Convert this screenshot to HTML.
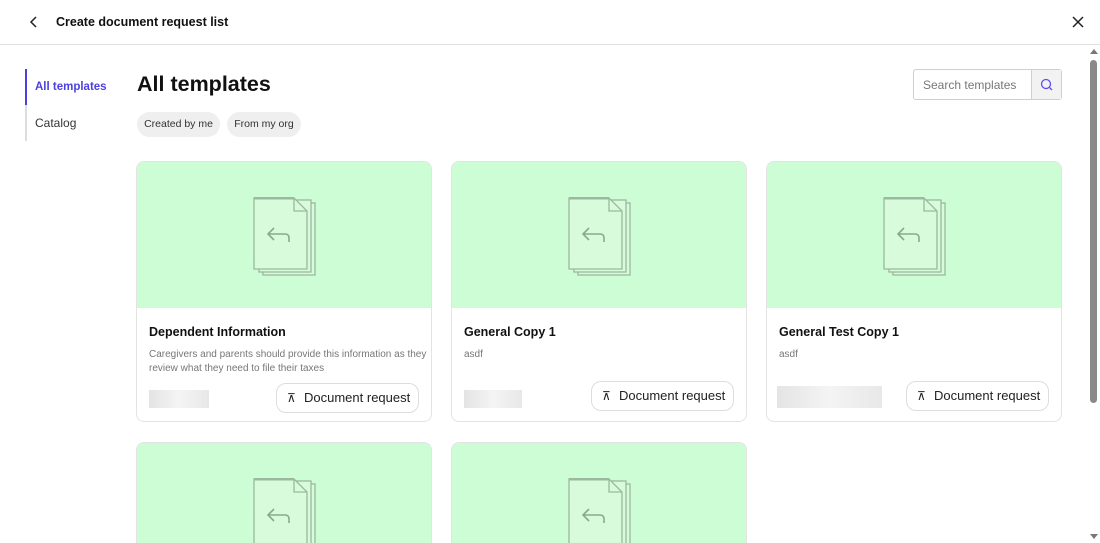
<!DOCTYPE html>
<html><head><style>
*{box-sizing:border-box;margin:0;padding:0}
html,body{width:1100px;height:543px;overflow:hidden}
body{background:#fff;font-family:"Liberation Sans",sans-serif;color:#111;position:relative}
.hdr{position:absolute;left:0;top:0;width:1100px;height:45px;border-bottom:1px solid #e2e2e2}
.hdr .t{position:absolute;left:56px;top:15px;font-size:12.5px;font-weight:bold}
.nav{position:absolute;left:25px;top:69px;width:2px;height:72px;background:#ddd}
.nav .a{position:absolute;left:0;top:0;width:2px;height:36px;background:#4b3fe0}
.n1{position:absolute;left:35px;top:81px;font-size:11.5px;font-weight:bold;color:#4b3fe0}
.n2{position:absolute;left:35px;top:116px;font-size:12px;color:#333}
h1{position:absolute;left:137px;top:72px;font-size:21.5px;font-weight:bold}
.chip{position:absolute;top:112px;height:25px;border-radius:13px;background:#efefef;font-size:10.5px;color:#333;line-height:25px;text-align:center}
.search{position:absolute;left:913px;top:69px;width:149px;height:31px;border:1px solid #cfcfcf;border-radius:3px}
.search span{position:absolute;left:9px;top:8px;font-size:12px;color:#777}
.search .b{position:absolute;right:0;top:0;width:30px;height:29px;background:#f2f2f2;border-left:1px solid #cfcfcf}
.card{position:absolute;width:296px;height:261px;border:1px solid #e3e3e3;border-radius:8px;overflow:hidden;background:#fff}
.card.s{height:101px;border-bottom:none;border-radius:8px 8px 0 0}
.img{height:146px;background:#ccfdd4;position:relative}
.img svg{position:absolute;left:116px;top:35px}
.ti{position:absolute;left:12px;top:163px;font-size:12.5px;font-weight:bold}
.ds{position:absolute;left:12px;top:186px;font-size:10px;color:#777;line-height:14px;width:280px}
.ph{position:absolute;height:18px;background:linear-gradient(90deg,#e4e4e4,#f4f4f4,#e8e8e8)}
.btn{position:absolute;right:12px;width:143px;height:30px;border:1px solid #ddd;border-radius:10px;font-size:13px;line-height:28px;padding-left:27px;color:#222}
.btn i{position:absolute;left:10px;top:0;font-style:normal;font-size:12px}
.sb{position:absolute;left:1089px;top:45px;width:11px;height:498px}
.sb .th{position:absolute;left:1px;top:15px;width:7px;height:343px;border-radius:4px;background:#8a8a8a}
</style></head><body>
<div class="hdr">
<svg style="position:absolute;left:28px;top:15px" width="12" height="14"><path d="M8 2 L3 7 L8 12" stroke="#222" stroke-width="1.5" fill="none"/></svg>
<div class="t">Create document request list</div>
<svg style="position:absolute;left:1071px;top:15px" width="14" height="14"><path d="M2 2L12 12M12 2L2 12" stroke="#222" stroke-width="1.5"/></svg>
</div>
<div class="nav"><div class="a"></div></div>
<div class="n1">All templates</div><div class="n2">Catalog</div>
<h1>All templates</h1>
<div class="chip" style="left:137px;width:83px">Created by me</div>
<div class="chip" style="left:227px;width:74px">From my org</div>
<div class="search"><span>Search templates</span><div class="b"><svg style="position:absolute;left:8px;top:8px" width="14" height="14"><circle cx="6" cy="6" r="4.5" stroke="#5b4ff0" stroke-width="1.3" fill="none"/><path d="M9.5 9.5L12 12" stroke="#5b4ff0" stroke-width="1.3"/></svg></div></div>

<svg width="0" height="0" style="position:absolute"><defs><g id="d">
<rect x="10" y="6" width="52" height="72" fill="#d8fbdc" stroke="#9ab99e" stroke-width="1.3"/>
<rect x="6" y="3" width="52" height="72" fill="#d8fbdc" stroke="#9ab99e" stroke-width="1.3"/>
<path d="M1 1H41L54 14V72H1Z" fill="#d8fbdc" stroke="#9ab99e" stroke-width="1.3"/>
<path d="M1 1H41" stroke="#9ab99e" stroke-width="3"/>
<path d="M41 1V14H54" fill="none" stroke="#9ab99e" stroke-width="1.3"/>
<path d="M21 31L15 37L21 43M15 37H32Q36 37 36 41V45" fill="none" stroke="#8aa98e" stroke-width="1.6"/>
</g></defs></svg>

<div class="card" style="left:136px;top:161px"><div class="img"><svg width="64" height="80"><use href="#d"/></svg></div>
<div class="ti">Dependent Information</div><div class="ds">Caregivers and parents should provide this information as they review what they need to file their taxes</div>
<div class="ph" style="left:12px;top:228px;width:60px"></div><div class="btn" style="top:221px"><i>⊼</i>Document request</div></div>

<div class="card" style="left:451px;top:161px"><div class="img"><svg width="64" height="80"><use href="#d"/></svg></div>
<div class="ti">General Copy 1</div><div class="ds">asdf</div>
<div class="ph" style="left:12px;top:228px;width:58px"></div><div class="btn" style="top:219px"><i>⊼</i>Document request</div></div>

<div class="card" style="left:766px;top:161px"><div class="img"><svg width="64" height="80"><use href="#d"/></svg></div>
<div class="ti">General Test Copy 1</div><div class="ds">asdf</div>
<div class="ph" style="left:10px;top:224px;width:105px;height:22px"></div><div class="btn" style="top:219px"><i>⊼</i>Document request</div></div>

<div class="card s" style="left:136px;top:442px"><div class="img"><svg width="64" height="80"><use href="#d"/></svg></div></div>
<div class="card s" style="left:451px;top:442px"><div class="img"><svg width="64" height="80"><use href="#d"/></svg></div></div>

<div class="sb"><svg style="position:absolute;left:0;top:2px" width="10" height="8"><path d="M1 7L5 2L9 7Z" fill="#777"/></svg><div class="th"></div><svg style="position:absolute;left:0;top:488px" width="10" height="8"><path d="M1 1L5 6L9 1Z" fill="#777"/></svg></div>
</body></html>
